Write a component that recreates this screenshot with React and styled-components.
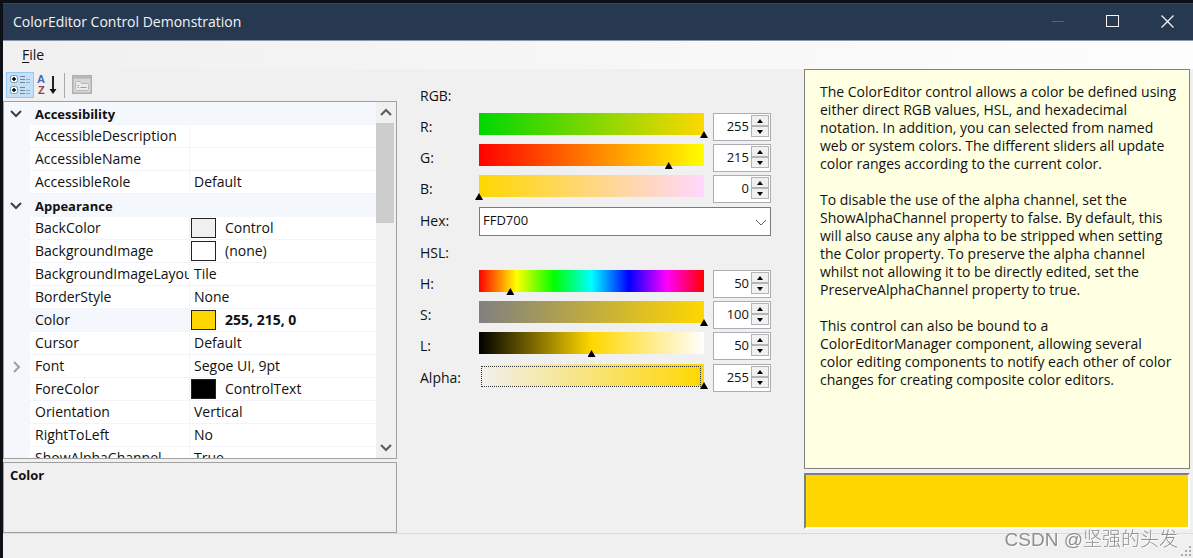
import React, { useState } from "react";
import styled, { createGlobalStyle, css } from "styled-components";


const GlobalStyle = createGlobalStyle`
    * {
        box-sizing: border-box;
    }
    body {
        background: #0e1018;
        margin: 0;
    }
    body, button, input, select {
        color: #111;
        font-family: "Open Sans", "Noto Sans", sans-serif;
        font-size: 14px;
        line-height: 18px;
    }
`
const Desktop = styled.div`
    display: flex;
    height: 100vh;
    padding: 3px 0 0 3px;
`
const Window = styled.main`
    background: #f0f0f0;
    display: flex;
    flex: 1;
    flex-direction: column;
    min-width: 0;
`
const TitleBar = styled.header`
    align-items: center;
    background: #263951;
    border-bottom: 1px solid #8b98a6;
    border-top: 1px solid #33475e;
    color: #f2f4f6;
    display: flex;
    height: 38px;
    justify-content: space-between;
    padding-left: 10px;
`
const Title = styled.h1`
    font-size: 14px;
    font-weight: 400;
    margin: 0;
`
const WindowButtons = styled.div`
    display: flex;
    gap: 5px;
`
const WindowButton = styled.button`
    align-items: center;
    background: none;
    border: 0;
    color: ${({ $dim }) => ($dim ? "#56667a" : "#f4f4f4")};
    display: flex;
    height: 36px;
    justify-content: center;
    padding: 0;
    width: 50px;
`
const MenuBar = styled.nav`
    align-items: center;
    background: linear-gradient(to right, #f0f0f0, #fdfdfd);
    display: flex;
    height: 28px;
    padding-left: 11px;
`
const MenuItem = styled.button`
    background: none;
    border: 0;
    padding: 0 8px;

    u {
        text-underline-offset: 2px;
    }
`
const Body = styled.div`
    display: grid;
    flex: 1;
    grid-template-columns: minmax(0, 394fr) minmax(0, 407fr) minmax(0, 389fr);
    grid-template-rows: minmax(0, 1fr);
    min-height: 0;
`
const StatusBar = styled.footer`
    align-items: flex-end;
    border-top: 1px solid #dcdcdc;
    display: flex;
    height: 25px;
    justify-content: flex-end;
`

const PropertyPanel = styled.section`
    display: flex;
    flex-direction: column;
    min-height: 0;
`
const Toolbar = styled.div`
    align-items: center;
    display: flex;
    height: 32px;
    padding: 0 3px;
`
const ToolButton = styled.button`
    align-items: center;
    background: ${({ $active }) => ($active ? "#c2e0f8" : "none")};
    border: 1px solid ${({ $active }) => ($active ? "#90c8f6" : "transparent")};
    display: flex;
    height: 26px;
    justify-content: center;
    padding: 0;
    width: 28px;
`
const ToolSeparator = styled.span`
    background: #a8a8a8;
    height: 25px;
    margin: 0 3px 0 2px;
    width: 1px;
`
const GridBox = styled.div`
    background: #fff;
    border: 1px solid #a0a0a0;
    display: flex;
    flex: 1;
    min-height: 0;
    overflow: hidden;
`
const GridTable = styled.table`
    align-self: flex-start;
    border-collapse: separate;
    border-spacing: 0;
    flex: 1;
    table-layout: fixed;
    width: 0;
`
const Gutter = styled.td`
    background: #f4f7fc;
    color: ${({ $light }) => ($light ? "#a0a0a0" : "#404040")};
    height: 23px;
    padding: 0 0 0 6px;

    svg {
        display: block;
    }
`
const Category = styled.th`
    background: #f4f7fc;
    font-size: 13px;
    font-weight: 700;
    padding: 0 5px;
    text-align: left;
`
const NameCell = styled.th`
    background: ${({ $selected }) => ($selected ? "#f4f7fc" : "#fff")};
    border-bottom: 1px solid #f1f5fb;
    border-right: 1px solid #f1f5fb;
    font-weight: 400;
    overflow: hidden;
    padding: 0 0 0 5px;
    text-align: left;
    white-space: nowrap;
`
const ValueCell = styled.td`
    border-bottom: 1px solid #f1f5fb;
    font-weight: ${({ $bold }) => ($bold ? 700 : 400)};
    padding: 0 0 0 ${({ $swatch }) => ($swatch ? "1px" : "4px")};
    white-space: nowrap;
`
const ValueContent = styled.div`
    align-items: center;
    display: flex;
    gap: 9px;
`
const Swatch = styled.span`
    background: ${({ $color }) => $color};
    border: 1px solid #222;
    height: 20px;
    width: 25px;
`
const ScrollBar = styled.div`
    background: #f0f0f0;
    display: flex;
    flex-direction: column;
    width: 20px;
`
const ScrollButton = styled.button`
    align-items: center;
    background: none;
    border: 0;
    color: #5c5c5c;
    display: flex;
    height: 21px;
    justify-content: center;
    padding: 0;
`
const ScrollTrack = styled.div`
    flex: 1;
`
const ScrollThumb = styled.div`
    background: #cdcdcd;
    height: 32%;
    margin-right: 2px;
`
const HelpBox = styled.div`
    border: 1px solid #a0a0a0;
    height: 71px;
    margin-top: 3px;
    padding: 3px 6px;
`
const HelpTitle = styled.h2`
    font-size: 13px;
    margin: 0;
`

const Editor = styled.form`
    display: flex;
    flex-direction: column;
    gap: 4px;
    padding: 13px 33px 0 23px;
`
const Group = styled.div`
    display: flex;
    flex-direction: column;
    gap: 3px;
`
const GroupTitle = styled.div`
    line-height: 28px;
`
const Row = styled.div`
    column-gap: 5px;
    display: grid;
    grid-template-columns: 50px minmax(0, 1fr) 58px;
`
const RowLabel = styled.label`
    line-height: 28px;
`
const SliderBox = styled.div`
    position: relative;

    ${({ $focused }) => $focused && css`
        &::after {
            border: 1px dotted #333;
            content: "";
            height: 19px;
            left: 6px;
            pointer-events: none;
            position: absolute;
            right: 7px;
            top: 2px;
        }
    `}
`
const sliderThumb = css`
    appearance: none;
    background: #000;
    border: 0;
    border-radius: 0;
    clip-path: polygon(50% 0, 100% 100%, 0 100%);
    height: 7px;
    width: 8px;
`
const Slider = styled.input`
    appearance: none;
    background: linear-gradient(to right, ${({ $stops }) => $stops}) 4px 0 / calc(100% - 8px) 22px no-repeat;
    display: block;
    height: 25px;
    margin: 0;
    outline: 0;
    width: 100%;

    &::-webkit-slider-runnable-track {
        height: 25px;
    }
    &::-webkit-slider-thumb {
        ${sliderThumb}
        margin-top: 18px;
    }
    &::-moz-range-thumb {
        ${sliderThumb}
    }
`
const NumberBox = styled.div`
    background: #fff;
    border: 1px solid #abadb3;
    display: flex;
    height: 28px;
    padding: 1px 1px 3px 0;
`
const NumberInput = styled.input`
    background: none;
    border: 0;
    flex: 1;
    font-size: 13px;
    height: 21px;
    min-width: 0;
    outline: 0;
    padding: 0 2px 0 0;
    text-align: right;
`
const Spinner = styled.div`
    display: flex;
    flex-direction: column;
    width: 18px;
`
const SpinButton = styled.button`
    align-items: center;
    background: #f0f0f0;
    border: 1px solid #b4b4b4;
    display: flex;
    flex: 1;
    justify-content: center;
    padding: 0;
`
const HexRow = styled.div`
    display: grid;
    grid-template-columns: 59px minmax(0, 1fr);
    margin-bottom: -1px;
`
const SelectBox = styled.div`
    color: #606060;
    position: relative;

    svg {
        pointer-events: none;
        position: absolute;
        right: 4px;
        top: 10px;
    }
`
const HexSelect = styled.select`
    appearance: none;
    background: #fff;
    border: 1px solid #7a7a7a;
    border-radius: 0;
    display: block;
    font-size: 13px;
    height: 29px;
    padding: 0 24px 3px 3px;
    width: 100%;
`

const InfoPanel = styled.aside`
    display: flex;
    flex-direction: column;
    gap: 4px;
    min-height: 0;
    padding: 0 3px 4px 0;
`
const InfoBox = styled.div`
    background: #ffffe1;
    border: 1px solid #808080;
    flex: 1;
    min-height: 0;
    overflow: hidden;
    padding: 13px 15px;
`
const InfoText = styled.p`
    margin: 0 0 18px;
    white-space: nowrap;
`
const Preview = styled.div`
    background: #ffd700;
    border: 2px solid;
    border-color: #808080 #fff #fff #808080;
    height: 56px;
`
const Watermark = styled.div`
    bottom: 6px;
    color: #8e8e8e;
    font-family: "Liberation Sans", "Noto Sans CJK SC", sans-serif;
    font-size: 19px;
    font-weight: 300;
    line-height: 24px;
    position: fixed;
    right: 15px;
    text-shadow: 1px 1px 0 #fff;
`

const Chevron = ({ dir, width = 12, stroke = 2 }) => {
    const points = {
        down: "1,3 6,8 11,3",
        up: "1,8 6,3 11,8",
        right: "4,1 9,6 4,11",
    }
    return (
        <svg width={width} height={width} viewBox="0 0 12 12" fill="none" stroke="currentColor" strokeWidth={stroke}>
            <polyline points={points[dir]} />
        </svg>
    )
}

const CategorizedIcon = () => (
    <svg width="22" height="22" viewBox="0 0 22 22">
        {[1, 12].map((y) => (
            <g key={y}>
                <rect x="1.5" y={y + 0.5} width="7" height="7" rx="2" fill="#fff" stroke="#7f93ac" />
                <path d={`M3 ${y + 4}h4M5 ${y + 2}v4`} stroke="#000" strokeWidth="1.5" />
                <path d={`M11 ${y + 1.5}h5M11 ${y + 4.5}h5M11 ${y + 7.5}h5`} stroke="#76869a" />
                <path d={`M17 ${y + 4.5}h4M17 ${y + 7.5}h4`} stroke="#94aac2" />
            </g>
        ))}
    </svg>
)

const SortIcon = () => (
    <svg width="22" height="24" viewBox="0 0 22 24" fontFamily="Liberation Sans, sans-serif" fontSize="11" fontWeight="700">
        <text x="0" y="10" fill="#4a68b4">A</text>
        <text x="1" y="21" fill="#9b3f42">Z</text>
        <path d="M16 3v15" stroke="#222" strokeWidth="2" />
        <path d="M12.500 16h7l-3.500 5z" fill="#111" />
    </svg>
)

const PagesIcon = () => (
    <svg width="20" height="20" viewBox="0 0 20 20" fill="none">
        <rect x="0.750" y="0.750" width="18.500" height="17.500" fill="#d6d6d6" stroke="#b0b0b0" strokeWidth="1.500" />
        <path d="M1 2.500h18" stroke="#b3b3b3" strokeWidth="2" />
        <path d="M3.500 14.500v-7l1-1h4l1 2h6l1 1v5l-1 1h-11z" fill="#ebebeb" stroke="#b8b8b8" />
        <path d="M5.500 10.500h1.500M5.500 12.500h1.500M8.500 12.500h6" stroke="#9a9a9a" />
    </svg>
)

const properties = [
    { category: "Accessibility" },
    { name: "AccessibleDescription", value: "" },
    { name: "AccessibleName", value: "" },
    { name: "AccessibleRole", value: "Default" },
    { category: "Appearance" },
    { name: "BackColor", value: "Control", swatch: "#f0f0f0" },
    { name: "BackgroundImage", value: "(none)", swatch: "#fff" },
    { name: "BackgroundImageLayout", value: "Tile" },
    { name: "BorderStyle", value: "None" },
    { name: "Color", value: "255, 215, 0", swatch: "#ffd700", selected: true },
    { name: "Cursor", value: "Default" },
    { name: "Font", value: "Segoe UI, 9pt", expandable: true },
    { name: "ForeColor", value: "ControlText", swatch: "#000" },
    { name: "Orientation", value: "Vertical" },
    { name: "RightToLeft", value: "No" },
    { name: "ShowAlphaChannel", value: "True" },
]

const rgbChannels = [
    { label: "R", max: 255, start: 255, stops: "#00d700, #ffd700" },
    { label: "G", max: 255, start: 215, stops: "#ff0000, #ffff00" },
    { label: "B", max: 255, start: 0, stops: "#ffd700, #ffd7ff" },
]

const hslChannels = [
    { label: "H", max: 359, start: 50, stops: "#f00, #ff0, #0f0, #0ff, #00f, #f0f, #f00" },
    { label: "S", max: 100, start: 100, stops: "#808080, #ffd700" },
    { label: "L", max: 100, start: 50, stops: "#000, #ffd700, #fff" },
]

const Channel = ({ label, max, start, stops, focused }) => {
    const [value, setValue] = useState(start)
    const change = (next) => setValue(Math.max(0, Math.min(max, Number(next) || 0)))

    return (
        <Row>
            <RowLabel htmlFor={label}>{label}:</RowLabel>
            <SliderBox $focused={focused}>
                <Slider
                    type="range"
                    aria-label={label}
                    min={0}
                    max={max}
                    value={value}
                    $stops={stops}
                    onChange={(e) => change(e.target.value)}
                />
            </SliderBox>
            <NumberBox>
                <NumberInput id={label} type="text" value={value} onChange={(e) => change(e.target.value)} />
                <Spinner>
                    <SpinButton type="button" aria-label="Increase" onClick={() => change(value + 1)}>
                        <svg width="6" height="4" viewBox="0 0 6 4"><path d="M3 0l3 4H0z" /></svg>
                    </SpinButton>
                    <SpinButton type="button" aria-label="Decrease" onClick={() => change(value - 1)}>
                        <svg width="6" height="4" viewBox="0 0 6 4"><path d="M0 0h6L3 4z" /></svg>
                    </SpinButton>
                </Spinner>
            </NumberBox>
        </Row>
    )
}

const PropertyRow = ({ item }) => {
    if (item.category) {
        return (
            <tr>
                <Gutter><Chevron dir="down" /></Gutter>
                <Category colSpan={2}>{item.category}</Category>
            </tr>
        )
    }
    return (
        <tr>
            <Gutter $light>{item.expandable && <Chevron dir="right" />}</Gutter>
            <NameCell scope="row" $selected={item.selected}>{item.name}</NameCell>
            <ValueCell $swatch={item.swatch} $bold={item.selected}>
                <ValueContent>
                    {item.swatch && <Swatch $color={item.swatch} />}
                    {item.value}
                </ValueContent>
            </ValueCell>
        </tr>
    )
}

const GutterCol = styled.col`
    width: 26px;
`
const NameCol = styled.col`
    width: 160px;
`

const App = () => {
    return (
        <Desktop>
            <GlobalStyle />
            <Window>

                <TitleBar>
                    <Title>ColorEditor Control Demonstration</Title>
                    <WindowButtons>
                        <WindowButton $dim aria-label="Minimize">
                            <svg width="12" height="12" stroke="currentColor"><path d="M0 5.500h12" /></svg>
                        </WindowButton>
                        <WindowButton aria-label="Maximize">
                            <svg width="14" height="14" fill="none" stroke="currentColor"><rect x="0.500" y="0.500" width="12" height="11" /></svg>
                        </WindowButton>
                        <WindowButton aria-label="Close">
                            <svg width="14" height="14" stroke="currentColor" strokeWidth="1.300"><path d="M0.500 0.500l12 12M12.500 0.500l-12 12" /></svg>
                        </WindowButton>
                    </WindowButtons>
                </TitleBar>

                <MenuBar>
                    <MenuItem><u>F</u>ile</MenuItem>
                </MenuBar>

                <Body>
                    <PropertyPanel>
                        <Toolbar>
                            <ToolButton $active aria-label="Categorized"><CategorizedIcon /></ToolButton>
                            <ToolButton aria-label="Alphabetical"><SortIcon /></ToolButton>
                            <ToolSeparator />
                            <ToolButton aria-label="Property pages"><PagesIcon /></ToolButton>
                        </Toolbar>
                        <GridBox>
                            <GridTable>
                                <colgroup>
                                    <GutterCol />
                                    <NameCol />
                                    <col />
                                </colgroup>
                                <tbody>
                                    {properties.map((item) => (
                                        <PropertyRow key={item.category || item.name} item={item} />
                                    ))}
                                </tbody>
                            </GridTable>
                            <ScrollBar>
                                <ScrollButton aria-label="Scroll up"><Chevron dir="up" /></ScrollButton>
                                <ScrollTrack><ScrollThumb /></ScrollTrack>
                                <ScrollButton aria-label="Scroll down"><Chevron dir="down" /></ScrollButton>
                            </ScrollBar>
                        </GridBox>
                        <HelpBox>
                            <HelpTitle>Color</HelpTitle>
                        </HelpBox>
                    </PropertyPanel>

                    <Editor onSubmit={(e) => e.preventDefault()}>
                        <Group>
                            <GroupTitle>RGB:</GroupTitle>
                            {rgbChannels.map((channel) => <Channel key={channel.label} {...channel} />)}
                        </Group>
                        <HexRow>
                            <RowLabel htmlFor="hex">Hex:</RowLabel>
                            <SelectBox>
                                <HexSelect id="hex"><option>FFD700</option></HexSelect>
                                <Chevron dir="down" stroke={1} />
                            </SelectBox>
                        </HexRow>
                        <Group>
                            <GroupTitle>HSL:</GroupTitle>
                            {hslChannels.map((channel) => <Channel key={channel.label} {...channel} />)}
                        </Group>
                        <Channel label="Alpha" max={255} start={255} stops="#f0f0f0, #ffd700" focused />
                    </Editor>

                    <InfoPanel>
                        <InfoBox>
                            <InfoText>
                                The ColorEditor control allows a color be defined using<br />
                                either direct RGB values, HSL, and hexadecimal<br />
                                notation. In addition, you can selected from named<br />
                                web or system colors. The different sliders all update<br />
                                color ranges according to the current color.
                            </InfoText>
                            <InfoText>
                                To disable the use of the alpha channel, set the<br />
                                ShowAlphaChannel property to false. By default, this<br />
                                will also cause any alpha to be stripped when setting<br />
                                the Color property. To preserve the alpha channel<br />
                                whilst not allowing it to be directly edited, set the<br />
                                PreserveAlphaChannel property to true.
                            </InfoText>
                            <InfoText>
                                This control can also be bound to a<br />
                                ColorEditorManager component, allowing several<br />
                                color editing components to notify each other of color<br />
                                changes for creating composite color editors.
                            </InfoText>
                        </InfoBox>
                        <Preview />
                    </InfoPanel>
                </Body>

                <StatusBar>
                    <svg width="14" height="14" fill="#a8a8a8">
                        <path d="M10 2h2v2h-2zM6 6h2v2H6zM10 6h2v2h-2zM2 10h2v2H2zM6 10h2v2H6zM10 10h2v2h-2z" />
                    </svg>
                </StatusBar>

            </Window>
            <Watermark>CSDN @坚强的头发</Watermark>
        </Desktop>
    )
}

export default App;
